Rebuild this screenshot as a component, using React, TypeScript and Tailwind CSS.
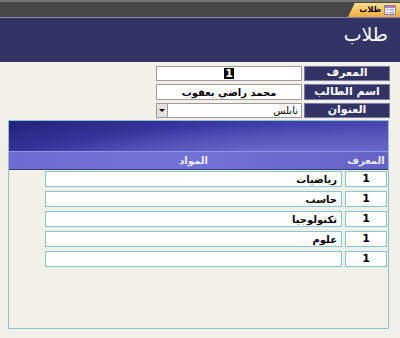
// StudentForm — طلاب نموذج مع نموذج فرعي للمواد
const ROWS = [
  { id: "1", name: "رياضيات" },
  { id: "1", name: "حاسب" },
  { id: "1", name: "تكنولوجيا" },
  { id: "1", name: "علوم" },
  { id: "1", name: "" },
]

const FormIcon = () => (
  <svg width="12" height="10" viewBox="0 0 12 10">
    <rect x="0.5" y="0.5" width="11" height="9" fill="#fbf6fb" stroke="#8a7fa8" />
    <rect x="1" y="1" width="10" height="2" fill="#c47ab8" />
    <rect x="5.5" y="4" width="4.5" height="1.5" fill="#8fa0d8" />
    <rect x="5.5" y="7" width="4.5" height="1.5" fill="#8fa0d8" />
    <rect x="2" y="4" width="2.5" height="1.5" fill="#b8b0c8" />
    <rect x="2" y="7" width="2.5" height="1.5" fill="#b8b0c8" />
  </svg>
)

const labelClass =
  "w-[86px] h-full flex items-center justify-center bg-[#333366] border border-[#7a7aa6] text-white text-[11px] font-bold"

export default function App() {
  return (
    <div
      dir="rtl"
      className="w-[400px] h-[338px] overflow-hidden flex flex-col bg-[#f3f0e8] font-['DejaVu_Sans',sans-serif]"
    >
      {/* شريط التبويب */}
      <div className="h-[18px] flex-none bg-[#474747] border-t-2 border-[#767676] border-b border-b-[#8a8ab0] flex items-end">
        <div className="h-[14px] w-[52px] flex items-center gap-[3px] pr-[4px] bg-gradient-to-b from-[#ffe08a] to-[#f2a93a] [clip-path:polygon(0_100%,13%_0,100%_0,100%_100%)]">
          <FormIcon />
          <span className="text-[8px] font-bold text-black leading-none">طلاب</span>
        </div>
      </div>

      {/* العنوان */}
      <div className="h-[44px] flex-none bg-[#333366] pr-[12px] pt-[6px]">
        <span className="text-[19px] text-white leading-none">طلاب</span>
      </div>

      {/* الحقول */}
      <div className="mt-[4px] pr-[10px] flex flex-col gap-[3px]">
        <div className="h-[15px] flex gap-[2px]">
          <div className={labelClass}>المعرف</div>
          <div className="w-[146px] h-full bg-white border border-[#9a9a9a] flex items-center justify-center">
            <span className="bg-black text-white text-[11px] font-bold leading-none px-[1px]">1</span>
          </div>
        </div>
        <div className="h-[16px] flex gap-[2px]">
          <div className={labelClass}>اسم الطالب</div>
          <div className="w-[146px] h-full bg-white border border-[#9a9a9a] flex items-center justify-center text-[10px] font-bold text-black">
            محمد راضي يعقوب
          </div>
        </div>
        <div className="h-[15px] flex gap-[2px]">
          <div className={labelClass}>العنوان</div>
          <div className="w-[146px] h-full bg-white border border-[#9a9a9a] flex items-center justify-between">
            <span className="pr-[3px] text-[10px] text-black">نابلس</span>
            <span className="w-[11px] h-full bg-[#e4e2dc] border-r border-[#9a9a9a] flex items-center justify-center">
              <span className="w-0 h-0 border-l-[3px] border-r-[3px] border-t-[3px] border-l-transparent border-r-transparent border-t-black" />
            </span>
          </div>
        </div>
      </div>

      {/* النموذج الفرعي */}
      <div className="mt-[2px] ml-[8px] mr-[11px] h-[209px] border border-[#86c4d6] flex flex-col">
        <div className="h-[30px] flex-none bg-[radial-gradient(ellipse_at_75%_140%,#7676d4_0%,transparent_65%),linear-gradient(170deg,#22227a_0%,#3c3ca6_45%,#5656bc_100%)]" />
        <div className="h-[19px] flex-none bg-[linear-gradient(90deg,#6c6cd2,#7272d6_50%,#6464c8)] border-t border-[#9494e0] border-b border-b-[#3a3a70] flex text-[10px] font-bold text-[#eeeeff]">
          <div className="w-[42px] mr-[1px] flex items-center justify-center">المعرف</div>
          <div className="w-[297px] mr-[3px] flex items-center justify-center">المواد</div>
        </div>
        <div className="mt-[1px] flex flex-col gap-[4px]">
          {ROWS.map((r, i) => (
            <div key={i} className="h-[16px] flex gap-[3px]">
              <div className="w-[42px] mr-[1px] h-full bg-white border border-[#86c4d6] flex items-center justify-center text-[11px] font-bold text-black">
                {r.id}
              </div>
              <div className="w-[297px] h-full bg-white border border-[#86c4d6] flex items-center pr-[4px] text-[10px] font-bold text-black">
                {r.name}
              </div>
            </div>
          ))}
        </div>
      </div>
    </div>
  )
}
